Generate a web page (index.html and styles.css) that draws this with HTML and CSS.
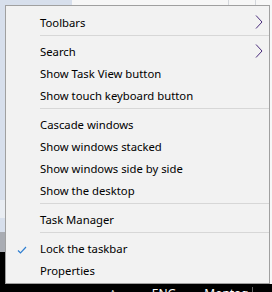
FILE: index.html
```html
<!DOCTYPE html>
<html lang="en">
  <head>
    <meta charset="UTF-8" />
    <title>Taskbar menu</title>
    <link rel="stylesheet" href="styles.css">
  </head>
  <body>
    <div class="desk">
      <ul class="menu">
        <li class="item">Toolbars
          <svg class="arrow" width="8" height="14" viewBox="0 0 8 14"><path d="M1 0.5l6 6.5-6 6.5" /></svg>
        </li>
        <li class="sep"></li>
        <li class="item">Search
          <svg class="arrow" width="8" height="14" viewBox="0 0 8 14"><path d="M1 0.5l6 6.5-6 6.5" /></svg>
        </li>
        <li class="item">Show Task View button</li>
        <li class="item">Show touch keyboard button</li>
        <li class="sep"></li>
        <li class="item">Cascade windows</li>
        <li class="item">Show windows stacked</li>
        <li class="item">Show windows side by side</li>
        <li class="item">Show the desktop</li>
        <li class="sep"></li>
        <li class="item">Task Manager</li>
        <li class="sep"></li>
        <li class="item checked">
          <svg class="check" width="10" height="8" viewBox="0 0 10 8"><path d="M1 4.5l2.5 2.5 5.5-6" /></svg>
          Lock the taskbar
        </li>
        <li class="item">Properties</li>
      </ul>
    </div>
    <div class="taskbar">
      <span class="tray-up">^</span>
      <span class="lang">ENG</span>
      <span class="clock">Montag</span>
    </div>
  </body>
</html>
```

FILE: styles.css
```css
html,
body {
  margin: 0;
  padding: 0;
}
body {
  width: 272px;
  height: 292px;
  overflow: hidden;
  font-family: "Noto Sans", "Open Sans", sans-serif;
  font-size: 11.3px;
  background: #000;
}
.desk {
  height: 284px;
  padding: 5px 0 0 5px;
  box-sizing: border-box;
  background:
    linear-gradient(#000, #000) 0 252px / 5px 40px no-repeat,
    linear-gradient(#a9acb3, #a9acb3) 0 232px / 5px 20px no-repeat,
    linear-gradient(#e9edf3, #e9edf3) 0 200px / 5px 18px no-repeat,
    linear-gradient(#d4d7dc, #d4d7dc) 228px 0 / 1px 5px no-repeat,
    linear-gradient(#d4d7dc, #d4d7dc) 255px 0 / 1px 5px no-repeat,
    linear-gradient(#f7f7f7, #f7f7f7) 72px 0 / 200px 5px no-repeat,
    linear-gradient(#f7f7f7, #f7f7f7) 270px 0 / 2px 284px no-repeat,
    #d7dfec;
}
.menu {
  list-style: none;
  margin: 0;
  padding: 4px 0 3px;
  width: 265px;
  box-sizing: border-box;
  background: #f2f2f2;
  border: 1px solid #a0a0a0;
}
.item {
  position: relative;
  height: 22px;
  box-sizing: border-box;
  padding-top: 3px;
  line-height: 19px;
  padding-left: 34px;
  color: #000;
  white-space: nowrap;
}
.sep {
  height: 7px;
  margin-left: 34px;
  background: linear-gradient(#d7d7d7, #d7d7d7) 0 3px / 100% 1px no-repeat;
}
.arrow {
  position: absolute;
  right: 6px;
  top: 5px;
  fill: none;
  stroke: #4a2c7c;
  stroke-width: 1;
}
.check {
  position: absolute;
  left: 11px;
  top: 10px;
  fill: none;
  stroke: #2f7fd1;
  stroke-width: 1.2;
}
.taskbar {
  height: 8px;
  overflow: hidden;
  display: flex;
  align-items: flex-start;
  color: #fff;
  font-size: 12px;
  line-height: 14px;
  padding-top: 3px;
  box-sizing: border-box;
}
.tray-up {
  margin-left: 110px;
  font-size: 10px;
}
.lang {
  margin-left: 36px;
}
.clock {
  margin-left: 28px;
  padding-right: 4px;
  border-right: 1px solid #666;
}
```
